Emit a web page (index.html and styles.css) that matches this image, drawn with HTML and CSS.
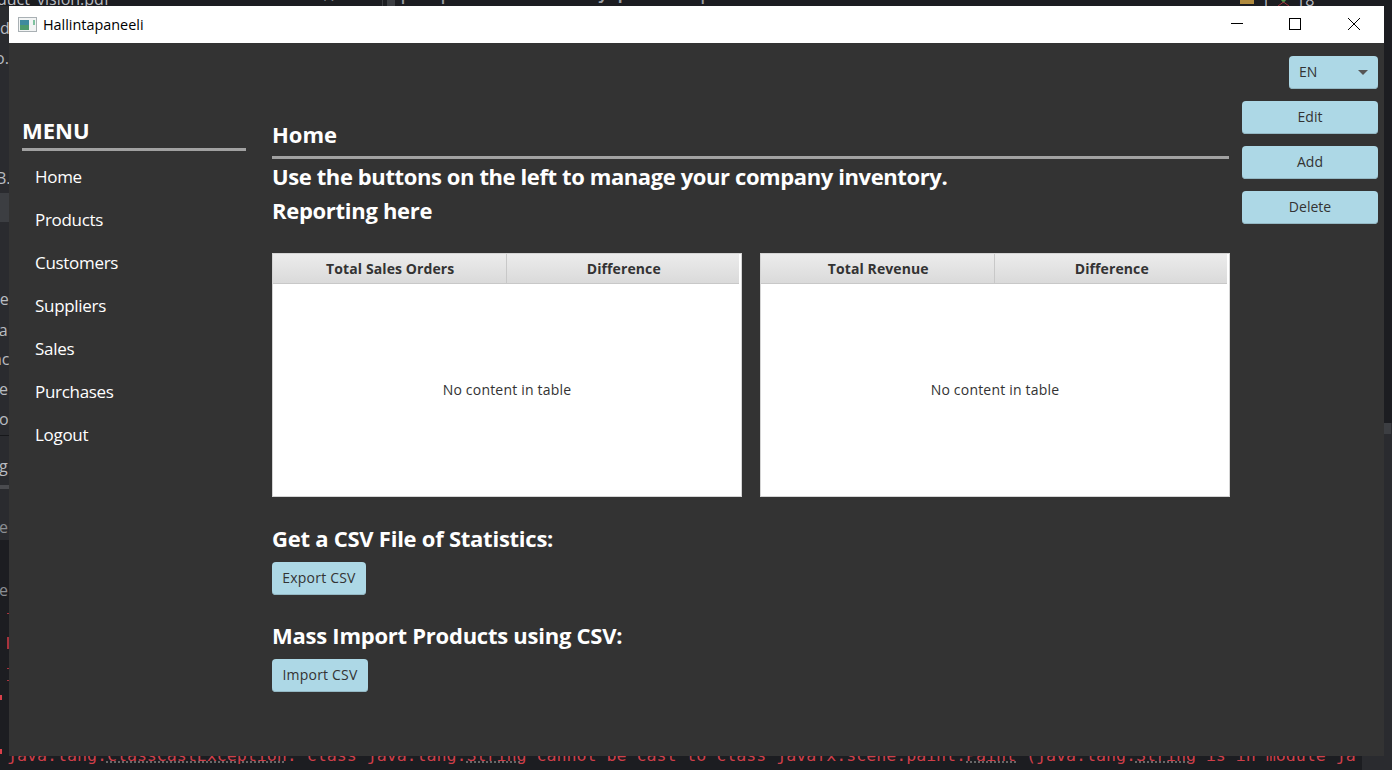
FILE: index.html
```html
<!DOCTYPE html>
<html lang="en">
<head>
    <meta charset="UTF-8">
    <title>Hallintapaneeli</title>
    <link rel="stylesheet" href="styles.css">
</head>
<body>
    <div class="desktop">
        <!-- IDE showing behind the window -->
        <div class="ide-side"></div>
        <div class="ide-side-active"></div>
        <div class="ide-rule ide-rule-one"></div>
        <div class="ide-rule ide-rule-two"></div>
        <div class="ide-right"></div>
        <div class="ide-right-box"></div>
        <div class="ide-corner"></div>
        <div class="ide-gutter"></div>
        <div class="ide-tab-box"></div>
        <div class="ide-mark mark-1"></div>
        <div class="ide-mark mark-2"></div>
        <div class="ide-mark mark-3"></div>
        <div class="ide-mark mark-4"></div>
        <div class="ide-mark mark-5"></div>
        <div class="ide-mark mark-6"></div>
        <div class="ide-lock"></div>
        <svg class="ide-arrow" width="13" height="6" viewBox="0 0 13 6"><path d="M4 0H9L6.500 3Z" fill="#4f9a4f"/><path d="M1 6L6.500 2L12 6" stroke="#a8333d" fill="none"/></svg>
        <span class="ide-text file-name">duct_vision.pdf</span>
        <span class="ide-text frag-1">ed</span>
        <span class="ide-text frag-2">o.</span>
        <span class="ide-text frag-3">B.</span>
        <span class="ide-text frag-4">ne</span>
        <span class="ide-text frag-5">ca</span>
        <span class="ide-text frag-6">nc</span>
        <span class="ide-text frag-7">ve</span>
        <span class="ide-text frag-8">o</span>
        <span class="ide-text frag-9">g</span>
        <span class="ide-text frag-10">e</span>
        <span class="ide-text frag-11">e</span>
        <span class="ide-text line-no">17</span>
        <span class="ide-text count-1">1</span>
        <span class="ide-text count-2">18</span>
        <span class="ide-mono ide-top">| 0 | Minor usability problem |</span>
        <span class="ide-mono ide-error">java.lang.<span class="err-link">ClassCastException</span>: class java.lang.<span class="err-link">String</span> cannot be cast to class javafx.scene.paint.<span class="err-link">Paint</span> (java.lang.<span class="err-link">String</span> is in module ja</span>

        <div class="window">
            <div class="titlebar">
                <svg class="app-icon" width="20" height="16" viewBox="0 0 20 16">
                    <rect x="0.5" y="0.5" width="18" height="14" fill="#f2f4f4" stroke="#a9b0b4"/>
                    <rect x="2" y="3" width="9" height="5" fill="#3f8a9e"/>
                    <rect x="2" y="8" width="9" height="5" fill="#4e9a6c"/>
                    <rect x="15" y="3" width="2" height="5" fill="#7fc3a0"/>
                </svg>
                <span class="title-text">Hallintapaneeli</span>
                <div class="win-controls">
                    <svg class="win-btn" width="12" height="12" viewBox="0 0 12 12"><path d="M0 5.5H12" stroke="#000" fill="none"/></svg>
                    <svg class="win-btn win-max" width="12" height="12" viewBox="0 0 12 12"><rect x="0.5" y="0.5" width="11" height="11" stroke="#000" fill="none"/></svg>
                    <svg class="win-btn win-close" width="12" height="12" viewBox="0 0 12 12"><path d="M0 0L12 12M12 0L0 12" stroke="#000" fill="none"/></svg>
                </div>
            </div>

            <div class="content">
                <aside class="sidebar">
                    <h2 class="menu-title">MENU</h2>
                    <nav class="menu">
                        <a href="#home">Home</a>
                        <a href="#products">Products</a>
                        <a href="#customers">Customers</a>
                        <a href="#suppliers">Suppliers</a>
                        <a href="#sales">Sales</a>
                        <a href="#purchases">Purchases</a>
                        <a href="#logout">Logout</a>
                    </nav>
                </aside>

                <main class="main">
                    <h2 class="page-title">Home</h2>
                    <p class="intro intro-long">Use the buttons on the left to manage your company inventory.</p>
                    <p class="intro">Reporting here</p>

                    <div class="tables">
                        <div class="table">
                            <div class="table-head">
                                <div class="table-col">Total Sales Orders</div>
                                <div class="table-col">Difference</div>
                            </div>
                            <div class="table-empty">No content in table</div>
                        </div>
                        <div class="table">
                            <div class="table-head">
                                <div class="table-col">Total Revenue</div>
                                <div class="table-col">Difference</div>
                            </div>
                            <div class="table-empty">No content in table</div>
                        </div>
                    </div>

                    <h3 class="csv-title csv-export">Get a CSV File of Statistics:</h3>
                    <button class="btn btn-export" type="button">Export CSV</button>
                    <h3 class="csv-title csv-import">Mass Import Products using CSV:</h3>
                    <button class="btn btn-import" type="button">Import CSV</button>
                </main>

                <div class="actions">
                    <div class="btn lang-select">
                        <span>EN</span>
                        <span class="caret"></span>
                    </div>
                    <button class="btn btn-action" type="button">Edit</button>
                    <button class="btn btn-action" type="button">Add</button>
                    <button class="btn btn-action" type="button">Delete</button>
                </div>
            </div>
        </div>
    </div>
</body>
</html>
```

FILE: styles.css
```css
:root {
    --panel: #333333;
    --ide-dark: #1c1d21;
    --ide-side: #2a2b2f;
    --button: #add8e6;
    --button-text: #333333;
    --table-line: #d4d4d4;
}

* {
    margin: 0;
    padding: 0;
    box-sizing: border-box;
}

html, body {
    width: 1392px;
    height: 770px;
    overflow: hidden;
}

body {
    font-family: 'Open Sans', 'Noto Sans', sans-serif;
    background-color: var(--ide-dark);
}

/* Desktop: everything here sits on a free canvas */
.desktop {
    position: relative;
    width: 1392px;
    height: 770px;
    overflow: hidden;
}

.ide-side {
    position: absolute;
    left: 0;
    top: 6px;
    width: 9px;
    height: 534px;
    background-color: var(--ide-side);
}

.ide-side-active {
    position: absolute;
    left: 0;
    top: 193px;
    width: 9px;
    height: 29px;
    background-color: #3c3e42;
}

.ide-rule {
    position: absolute;
    left: 0;
    width: 9px;
    height: 1px;
    background-color: #17181b;
}

.ide-rule-one { top: 435px; }
.ide-rule-two { top: 485px; height: 4px; background-color: #4a4b4f; }

.ide-right {
    position: absolute;
    left: 1384px;
    top: 423px;
    width: 8px;
    height: 347px;
    background-color: var(--ide-side);
}

.ide-right-box {
    position: absolute;
    left: 1384px;
    top: 423px;
    width: 7px;
    height: 11px;
    background-color: #3c3e42;
}

.ide-corner {
    position: absolute;
    left: 1362px;
    top: 756px;
    width: 30px;
    height: 14px;
    background-color: var(--ide-side);
}

.ide-gutter {
    position: absolute;
    left: 382px;
    top: 0;
    width: 1px;
    height: 6px;
    background-color: #3c3e42;
}

.ide-tab-box {
    position: absolute;
    left: 387px;
    top: 0;
    width: 8px;
    height: 6px;
    background-color: #3c3e42;
}

.ide-mark {
    position: absolute;
    width: 2px;
    height: 1px;
    left: 7px;
    background-color: #a8333d;
}

.mark-1 { top: 613px; }
.mark-2 { top: 637px; height: 12px; }
.mark-3 { top: 668px; }
.mark-4 { top: 680px; }
.mark-5 { left: 0; top: 695px; height: 5px; background-color: #d9404a; }
.mark-6 { left: 0; top: 749px; height: 5px; background-color: #d9404a; }

.ide-lock {
    position: absolute;
    left: 1240px;
    top: 0;
    width: 14px;
    height: 4px;
    background-color: #b08a3e;
}

.ide-arrow {
    position: absolute;
    left: 1277px;
    top: 0;
}

.ide-text {
    position: absolute;
    font-size: 16px;
    line-height: 18px;
    color: #b9bcc1;
    white-space: nowrap;
}

.file-name { left: -3px; top: -10px; }
.frag-1 { left: -9px; top: 19px; }
.frag-2 { left: -5px; top: 49px; }
.frag-3 { left: -4px; top: 169px; }
.frag-4 { left: -10px; top: 290px; }
.frag-5 { left: -9px; top: 321px; }
.frag-6 { left: -8px; top: 350px; }
.frag-7 { left: -9px; top: 380px; }
.frag-8 { left: -1px; top: 410px; }
.frag-9 { left: -1px; top: 457px; }
.frag-10 { left: -1px; top: 518px; color: #8b8e93; }
.frag-11 { left: -1px; top: 581px; color: #8b8e93; }
.line-no { left: 320px; top: -14px; color: #7a7d83; }
.count-1 { left: 1261px; top: -9px; }
.count-2 { left: 1296px; top: -9px; }

.ide-mono {
    position: absolute;
    font-family: 'DejaVu Sans Mono', 'Liberation Mono', monospace;
    font-size: 16.6px;
    line-height: 20px;
    white-space: nowrap;
}

.ide-top {
    left: 398px;
    top: -15px;
    color: #9a9da3;
    font-weight: bold;
}

.ide-error {
    left: 7px;
    top: 746px;
    color: #cf3f4a;
}

.err-link {
    text-decoration: underline dotted #777;
}

/* Application window */
.window {
    position: absolute;
    left: 9px;
    top: 6px;
    width: 1375px;
    height: 750px;
    display: flex;
    flex-direction: column;
    background-color: var(--panel);
}

.titlebar {
    display: flex;
    align-items: center;
    height: 37px;
    flex-shrink: 0;
    padding-left: 9px;
    background-color: #fff;
}

.app-icon {
    margin-right: 5px;
}

.title-text {
    font-size: 14.4px;
    color: #000;
}

.win-controls {
    display: flex;
    margin-left: auto;
    padding-right: 24px;
    padding-bottom: 1px;
}

.win-max { margin-left: 46px; }
.win-close { margin-left: 47px; }

.content {
    flex: 1;
    display: flex;
    padding-left: 13px;
    padding-right: 6px;
}

/* Left menu */
.sidebar {
    width: 224px;
    padding-top: 72px;
    flex-shrink: 0;
}

.menu-title {
    font-size: 22px;
    font-weight: 700;
    line-height: 30px;
    color: #fff;
    border-bottom: 3px solid;
    border-image: linear-gradient(#b0b0b0, #dcdcdc, #a0a0a0) 1;
    padding-bottom: 3px;
}

.menu {
    display: flex;
    flex-direction: column;
    padding: 4px 0 0 13px;
}

.menu a {
    height: 43px;
    line-height: 43px;
    font-size: 17px;
    letter-spacing: -0.3px;
    color: #fff;
    text-decoration: none;
}

/* Main column */
.main {
    width: 957px;
    margin-left: 26px;
    flex-shrink: 0;
    padding-top: 76px;
}

.page-title {
    font-size: 22px;
    font-weight: 700;
    line-height: 30px;
    color: #fff;
    border-bottom: 3px solid;
    border-image: linear-gradient(#b0b0b0, #dcdcdc, #a0a0a0) 1;
    padding-bottom: 7px;
}

.intro {
    font-size: 22px;
    font-weight: 700;
    line-height: 34px;
    letter-spacing: -0.3px;
    color: #fff;
}

.intro-long {
    letter-spacing: -0.4px;
}

.tables {
    display: flex;
    gap: 18px;
    margin-top: 26px;
}

.table {
    width: 470px;
    height: 244px;
    flex-shrink: 0;
    display: flex;
    flex-direction: column;
    background-color: #fff;
    border: 1px solid var(--table-line);
}

.table-head {
    display: flex;
    height: 30px;
    margin-right: 2px;
    background: linear-gradient(#ececec, #dadada);
    border-bottom: 1px solid #c8c8c8;
}

.table-col {
    flex: 1;
    padding-left: 2px;
    text-align: center;
    font-size: 14px;
    font-weight: 700;
    line-height: 29px;
    letter-spacing: 0.1px;
    color: #333;
}

.table-col + .table-col {
    border-left: 1px solid #c8c8c8;
}

.table-empty {
    flex: 1;
    display: flex;
    align-items: center;
    justify-content: center;
    padding-bottom: 2px;
    font-size: 14px;
    letter-spacing: 0.2px;
    color: #333;
}

.csv-title {
    font-size: 22px;
    font-weight: 700;
    line-height: 30px;
    letter-spacing: -0.25px;
    color: #fff;
}

.csv-export { margin-top: 26px; }
.csv-import { margin-top: 25px; }

/* Buttons */
.btn {
    display: block;
    height: 33px;
    padding-bottom: 2px;
    font-family: inherit;
    font-size: 14px;
    color: var(--button-text);
    background-color: var(--button);
    border: none;
    border-radius: 4px;
    box-shadow: inset 0 -1px 0 #94b8c4;
}

.btn-export { width: 94px; margin-top: 9px; letter-spacing: 0.2px; }
.btn-import { width: 96px; margin-top: 9px; letter-spacing: 0.2px; }

.actions {
    width: 136px;
    margin-left: 13px;
    padding-top: 13px;
    display: flex;
    flex-direction: column;
    align-items: flex-end;
    gap: 12px;
    flex-shrink: 0;
}

.btn-action {
    width: 136px;
}

.lang-select {
    width: 89px;
    display: flex;
    align-items: center;
    justify-content: space-between;
    padding: 0 10px 2px;
}

.caret {
    width: 0;
    height: 0;
    margin-top: 2px;
    border-left: 5px solid transparent;
    border-right: 5px solid transparent;
    border-top: 5px solid #555;
}
```
